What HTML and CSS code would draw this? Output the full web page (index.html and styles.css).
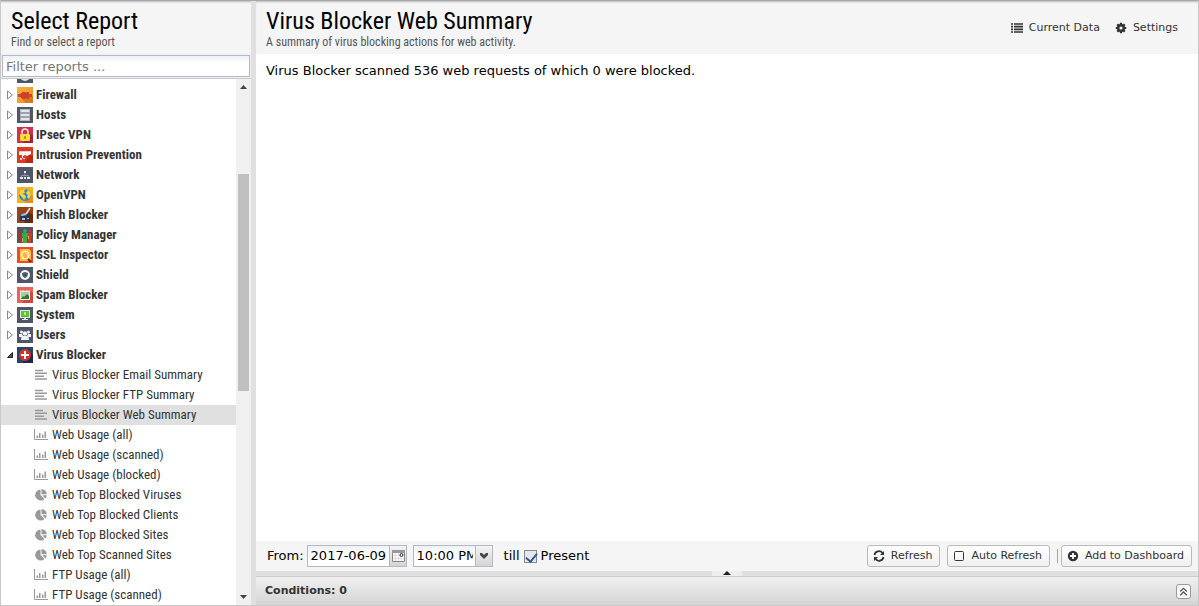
FILE: index.html
```
<!DOCTYPE html>
<html lang="en">
<head>
<meta charset="utf-8">
<title>Reports</title>
<link rel="stylesheet" href="styles.css">
</head>
<body>
<svg class="defs" aria-hidden="true">
  <linearGradient id="orange" x2="1" y2="1"><stop stop-color="#f5b63c"/><stop offset="1" stop-color="#e98a1c"/></linearGradient>
  <symbol id="i-arrow" viewBox="0 0 16 16"><path d="M6.500 4v8l5-4z" fill="#fff" stroke="#888"/></symbol>
  <symbol id="i-open" viewBox="0 0 16 16"><path d="M11.500 5.500v5h-5z" fill="#555" stroke="#222"/></symbol>
  <symbol id="i-events" viewBox="0 0 16 16"><path fill="#4f5668" d="M0 0h16v16H0z"/><circle cx="8" cy="9" r="5" fill="#e4e6ea"/><path d="M8 6v3h3" fill="none" stroke="#4f5668"/></symbol>
  <symbol id="i-firewall" viewBox="0 0 16 16"><path fill="url(#orange)" d="M0 0h16v16H0z"/><path fill="#d9781c" d="m5 12 10-3 1 1v6H9z"/><path fill="#d4402a" d="M1 7h3V6h1V5h3l1 1 1-1h2v2h3v3h-3v2h-2l-1-1-1 1H5v-1H4v-1H1z"/><path stroke="#b83a24" stroke-width=".7" d="M8.500 5.500v5"/></symbol>
  <symbol id="i-hosts" viewBox="0 0 16 16"><path fill="#4f5668" d="M0 0h16v16H0z"/><path fill="#b4b9c1" d="M3 2h10v12H3z"/><path stroke="#e3e6e9" stroke-width="2" d="M4 4h8M4 8h8M4 12h8"/><path stroke="#858c99" d="M3 6h10M3 10h10"/></symbol>
  <symbol id="i-ipsec" viewBox="0 0 16 16"><path fill="#d3304b" d="M0 0h16v16H0z"/><path fill="#a52039" d="m12 5 4 4v7H6z"/><path d="M5 8V5q0-3 3-3t3 3v3" fill="none" stroke="#f5e9ea" stroke-width="1.500"/><rect x="3" y="7" width="10" height="7" rx="1" fill="#fbdc3c"/><path stroke="#b07a12" stroke-width="1.500" d="M8 9v3"/></symbol>
  <symbol id="i-intrusion" viewBox="0 0 16 16"><path fill="#df3a20" d="M0 0h16v16H0z"/><path fill="#b92a14" d="m12 7 4 2v7H8z"/><path fill="#fff" d="M2 4h12v3l-4 2-2-1-2 1v2H5V8H2z"/><path fill="#ccd3d6" d="M2 4h12v1H2z"/><path fill="#d8dde0" d="M3 11h2v2H3zm3 0h2v1H6z"/></symbol>
  <symbol id="i-network" viewBox="0 0 16 16"><path fill="#4f5668" d="M0 0h16v16H0z"/><path d="M8 6v3M4.500 10V8.500h7V10" fill="none" stroke="#8a909c"/><path fill="#e6e8ee" d="M7 4h2v2H7zM3 10h3v2H3zm4 0h2v2H7zm3 0h3v2h-3z"/></symbol>
  <symbol id="i-openvpn" viewBox="0 0 16 16"><path fill="#fbb214" d="M0 0h16v16H0z"/><path fill="#f38d0d" d="m14 7 2 2v7H7z"/><circle cx="8" cy="8" r="6" fill="#2e8ccb"/><path fill="#ffd23f" d="M3 4q2-2 6-2L7 4l1 2-3 1 3 1 1 2-2 3-2-3-3-3zm8-1q3 2 3 5l-2 4-2-2 1-2-2-2z"/></symbol>
  <symbol id="i-phish" viewBox="0 0 16 16"><path fill="#9a4115" d="M0 0h16v16H0z"/><path fill="#6b2a0c" d="m12 5 4 3v8H7z"/><path stroke="#e6e1dc" stroke-width="1.500" d="m9 7 4-6"/><path fill="#233a59" d="M3 7h10v7H3z"/><path fill="#b4c0cf" d="m3 8 5-2 2 2-5 1zm2 3h3v2H5zm5 0h2v1h-2z"/></symbol>
  <symbol id="i-policy" viewBox="0 0 16 16"><path fill="#4f5668" d="M0 0h16v16H0z"/><g fill="#a8322f"><circle cx="3" cy="5" r="1.500"/><path d="M1 7h4v3H4v6H2v-6H1z"/></g><g fill="#2cae51"><circle cx="8" cy="4" r="2"/><path d="M5 6h6v4h-1v6H6v-6H5z"/></g><g fill="#d23b31"><circle cx="13" cy="4" r="1.500"/><path d="M11 6h4v3h-1v7h-3z"/></g><path stroke="#e5ae30" d="M5.500 11v4m6-6v3"/></symbol>
  <symbol id="i-ssl" viewBox="0 0 16 16"><path fill="#ef4930" d="M0 0h16v16H0z"/><path fill="#ffbf3b" d="M3 2h9l2 2v10H3z"/><circle cx="8" cy="8" r="4" fill="#ffd76c" stroke="#fff5e0"/><path stroke="#e58a35" d="M6 8h4M7 10h3M7 6h1"/><path stroke="#7a2418" stroke-width="2" d="m11 12 3 3"/></symbol>
  <symbol id="i-shield" viewBox="0 0 16 16"><path fill="#4f5668" d="M0 0h16v16H0z"/><circle cx="8" cy="8" r="5" fill="#f4f5f7"/><path fill="#4f5668" d="m8 5 3 1q0 4-3 5-3-1-3-5z"/></symbol>
  <symbol id="i-spam" viewBox="0 0 16 16"><path fill="#ec625b" d="M0 0h16v16H0z"/><path fill="#d1463f" d="m14 4 2 2v10H5z"/><path fill="#f4e9d9" d="m3 3 2 1 1-1 2 1 2-1 1 1 2-1v10H3z"/><path fill="#a9cbb4" d="M4 5h8v7H4z"/><path fill="#2b7a35" d="m4 12 2-3 1 1 3-3 2 2v3z"/></symbol>
  <symbol id="i-system" viewBox="0 0 16 16"><path fill="#4f5668" d="M0 0h16v16H0z"/><path fill="#dfe4df" d="M3 3h10v8H9v1h2v1H5v-1h2v-1H3z"/><path fill="#62bf3d" d="M4 4h8v6H4z"/><path fill="#b5e69d" d="M7 5h2v3H7z"/></symbol>
  <symbol id="i-users" viewBox="0 0 16 16"><path fill="#4f5668" d="M0 0h16v16H0z"/><g fill="#f0f1f4"><circle cx="4.500" cy="5" r="1.500"/><circle cx="11.500" cy="5" r="1.500"/><circle cx="8" cy="6.500" r="2.200"/><path d="M2 7h3l1 2-2 1H2zm12 0h-3l-1 2 2 1h2zM4 13q0-4 2-4h4q2 0 2 4z"/></g></symbol>
  <symbol id="i-virus" viewBox="0 0 16 16"><path fill="#29426a" d="M0 0h16v16H0z"/><path fill="#172a4a" d="m13 5 3 3v8H6z"/><circle cx="8" cy="8" r="6" fill="#cf352b"/><path fill="#fff" d="M7 4h2v3h3v2H9v3H7V9H4V7h3z"/></symbol>
  <symbol id="i-text" viewBox="0 0 14 14"><path stroke="#999" stroke-width="1.600" d="M1 2.500h8M1 5.300h12M1 8.200h9M1 11h12"/></symbol>
  <symbol id="i-bars" viewBox="0 0 14 14"><path d="M.5 1v10.500H14" fill="none" stroke="#999"/><path fill="#999" d="M2.500 7.500H4V10H2.500zM5 5h1.500v5H5zm3 1.500h1.500V10H8zm2.500-3H12V10h-1.500z"/></symbol>
  <symbol id="i-pie" viewBox="0 0 14 14"><g fill="#999"><path d="M6.500 1.500V7l4 4A5.500 5.500 0 1 1 6.500 1.500z"/><path d="M7.500 1A5.500 5.500 0 0 1 12.800 6.200H7.500zM8.300 7.200h4.500a5.500 5.500 0 0 1-1.500 3.200z"/></g></symbol>
</svg>

<div class="app">
  <aside class="sidebar">
    <header class="head">
      <h1>Select Report</h1>
      <p>Find or select a report</p>
    </header>
    <div class="filter"><input type="text" aria-label="Filter reports" placeholder="Filter reports ..."></div>
    <div class="treebox">
      <ul class="tree">
        <li class="group"><svg class="exp"><use href="#i-arrow"/></svg><svg class="app-icon"><use href="#i-events"/></svg>Events</li>
        <li class="group"><svg class="exp"><use href="#i-arrow"/></svg><svg class="app-icon"><use href="#i-firewall"/></svg>Firewall</li>
        <li class="group"><svg class="exp"><use href="#i-arrow"/></svg><svg class="app-icon"><use href="#i-hosts"/></svg>Hosts</li>
        <li class="group"><svg class="exp"><use href="#i-arrow"/></svg><svg class="app-icon"><use href="#i-ipsec"/></svg>IPsec VPN</li>
        <li class="group"><svg class="exp"><use href="#i-arrow"/></svg><svg class="app-icon"><use href="#i-intrusion"/></svg>Intrusion Prevention</li>
        <li class="group"><svg class="exp"><use href="#i-arrow"/></svg><svg class="app-icon"><use href="#i-network"/></svg>Network</li>
        <li class="group"><svg class="exp"><use href="#i-arrow"/></svg><svg class="app-icon"><use href="#i-openvpn"/></svg>OpenVPN</li>
        <li class="group"><svg class="exp"><use href="#i-arrow"/></svg><svg class="app-icon"><use href="#i-phish"/></svg>Phish Blocker</li>
        <li class="group"><svg class="exp"><use href="#i-arrow"/></svg><svg class="app-icon"><use href="#i-policy"/></svg>Policy Manager</li>
        <li class="group"><svg class="exp"><use href="#i-arrow"/></svg><svg class="app-icon"><use href="#i-ssl"/></svg>SSL Inspector</li>
        <li class="group"><svg class="exp"><use href="#i-arrow"/></svg><svg class="app-icon"><use href="#i-shield"/></svg>Shield</li>
        <li class="group"><svg class="exp"><use href="#i-arrow"/></svg><svg class="app-icon"><use href="#i-spam"/></svg>Spam Blocker</li>
        <li class="group"><svg class="exp"><use href="#i-arrow"/></svg><svg class="app-icon"><use href="#i-system"/></svg>System</li>
        <li class="group"><svg class="exp"><use href="#i-arrow"/></svg><svg class="app-icon"><use href="#i-users"/></svg>Users</li>
        <li class="group"><svg class="exp"><use href="#i-open"/></svg><svg class="app-icon"><use href="#i-virus"/></svg>Virus Blocker</li>
        <li class="leaf"><svg><use href="#i-text"/></svg>Virus Blocker Email Summary</li>
        <li class="leaf"><svg><use href="#i-text"/></svg>Virus Blocker FTP Summary</li>
        <li class="leaf selected"><svg><use href="#i-text"/></svg>Virus Blocker Web Summary</li>
        <li class="leaf"><svg><use href="#i-bars"/></svg>Web Usage (all)</li>
        <li class="leaf"><svg><use href="#i-bars"/></svg>Web Usage (scanned)</li>
        <li class="leaf"><svg><use href="#i-bars"/></svg>Web Usage (blocked)</li>
        <li class="leaf"><svg><use href="#i-pie"/></svg>Web Top Blocked Viruses</li>
        <li class="leaf"><svg><use href="#i-pie"/></svg>Web Top Blocked Clients</li>
        <li class="leaf"><svg><use href="#i-pie"/></svg>Web Top Blocked Sites</li>
        <li class="leaf"><svg><use href="#i-pie"/></svg>Web Top Scanned Sites</li>
        <li class="leaf"><svg><use href="#i-bars"/></svg>FTP Usage (all)</li>
        <li class="leaf"><svg><use href="#i-bars"/></svg>FTP Usage (scanned)</li>
      </ul>
      <div class="scrollbar">
        <svg class="scroll-arrow" viewBox="0 0 15 16"><path d="m4 10 3.500-4 3.500 4z" fill="#444"/></svg>
        <div class="track"><span class="before"></span><span class="thumb"></span><span class="after"></span></div>
        <svg class="scroll-arrow" viewBox="0 0 15 16"><path d="m4 6 3.500 4L11 6z" fill="#444"/></svg>
      </div>
    </div>
  </aside>

  <main class="main">
    <header class="head main-head">
      <div>
        <h1>Virus Blocker Web Summary</h1>
        <p>A summary of virus blocking actions for web activity.</p>
      </div>
      <nav class="actions">
        <button class="plain"><svg class="icon" viewBox="0 0 14 14"><path d="M1 3h2M1 5.700h2M1 8.300h2M1 11h2M4 3h9M4 5.700h9M4 8.300h9M4 11h9" stroke="#333" stroke-width="1.700"/></svg>Current Data</button>
        <button class="plain"><svg class="icon" viewBox="0 0 14 14"><circle cx="7" cy="7" r="2.800" fill="none" stroke="#333" stroke-width="2.400"/><path d="M7 1.800v2M7 10.200v2M1.800 7h2M10.200 7h2M3.300 3.300l1.400 1.400M9.300 9.300l1.400 1.400M10.700 3.300 9.300 4.700M4.700 9.300l-1.400 1.400" stroke="#333" stroke-width="2.200"/></svg>Settings</button>
      </nav>
    </header>
    <section class="report">Virus Blocker scanned 536 web requests of which 0 were blocked.</section>
    <footer class="toolbar">
      <label for="from">From:</label>
      <span class="field date"><input id="from" type="text" value="2017-06-09"><button aria-label="Pick a date"><svg viewBox="0 0 16 20"><path d="M2.500 4.500h12v11h-12z" fill="#fff" stroke="#888"/><path fill="#999" d="M2 4h13v3H2z"/><path d="M5.500 7v8M8.500 7v8M11.500 12v3M3 9.500h7M3 12.500h11" stroke="#ddd"/><circle cx="11.500" cy="9" r="1.500" fill="#fff" stroke="#222"/></svg></button></span>
      <span class="field time"><input type="text" aria-label="Time" value="10:00 PM"><button aria-label="Pick a time"><svg viewBox="0 0 16 20"><path d="M4 7h2l2 2 2-2h2v2l-4 4-4-4z" fill="#444"/></svg></button></span>
      <label class="till" for="present">till</label>
      <input class="check" id="present" type="checkbox" checked>
      <label for="present">Present</label>
      <span class="spacer"></span>
      <button class="btn"><svg class="icon" viewBox="0 0 14 14"><path d="M2.500 6A4.500 4.500 0 0 1 10.500 4M11.500 8a4.500 4.500 0 0 1-8 2" fill="none" stroke="#333" stroke-width="1.800"/><path d="M12 2v4H8zM2 12V8h4z" fill="#333"/></svg>Refresh</button>
      <button class="btn auto"><svg class="icon" viewBox="0 0 14 14"><rect x="2.500" y="2.500" width="9" height="9" rx="1" fill="none" stroke="#333"/></svg>Auto Refresh</button>
      <span class="sep"></span>
      <button class="btn"><svg class="icon" viewBox="0 0 14 14"><circle cx="7" cy="7" r="5.200" fill="#333"/><path d="M7 4v6M4 7h6" stroke="#fff" stroke-width="1.800"/></svg>Add to Dashboard</button>
    </footer>
    <div class="splitter"><svg viewBox="0 0 32 5"><path d="M1 0h30v5H1z" fill="#eee"/><path d="m12 4 4-4 4 4z" fill="#222"/></svg></div>
    <section class="conditions">
      <strong>Conditions: 0</strong>
      <button aria-label="Expand conditions"><svg viewBox="0 0 14 14"><path d="m3.500 7 3.500-3.500L10.500 7M3.500 11 7 7.500l3.500 3.500" fill="none" stroke="#555" stroke-width="1.300"/></svg></button>
    </section>
  </main>
</div>
</body>
</html>
```
FILE: styles.css
```
* { box-sizing: border-box; }
body {
  margin: 0;
  font: 13px/16px "DejaVu Sans", sans-serif;
  color: #000;
}
.defs { position: absolute; width: 0; height: 0; }
button, input { font: inherit; color: inherit; margin: 0; padding: 0; border-radius: 0; outline: 0; }
button { display: flex; align-items: center; background: none; border: 0; }
svg { display: block; flex: none; }

.app {
  display: flex;
  gap: 5px;
  height: 100vh;
  background: #e0e0e0;
  border: 1px solid #c8c8c8;
  border-top-color: #a8a8a8;
}
.sidebar { width: 250px; display: flex; flex-direction: column; flex: none; }
.main { flex: 1; min-width: 0; display: flex; flex-direction: column; }

.head {
  height: 53px;
  flex: none;
  padding: 6px 10px 0;
  background: #f5f5f5;
  box-shadow: inset 0 2px 2px -1px #bbb;
  font-family: "Roboto Condensed", "Liberation Sans Narrow", Roboto, sans-serif;
}
.head h1 { margin: 0; font-size: 24px; line-height: 28px; font-weight: 400; }
.head p { margin: 0; font-size: 12px; line-height: 14px; color: #555; }
.main-head { display: flex; justify-content: space-between; }

.filter { padding: 1px; background: #f0f0f0; border-bottom: 1px solid #c8c8c8; }
.filter input {
  display: block;
  width: 100%;
  height: 22px;
  padding: 0 3px;
  border: 1px solid #b5b8c8;
  background: linear-gradient(#eef2f4, #fff 8px);
}
.filter input::placeholder { color: #777; opacity: 1; }

.treebox { flex: 1; min-height: 0; display: flex; background: #fff; overflow: hidden; }
.tree {
  flex: 1;
  margin: -14px 0 0;
  padding: 0;
  list-style: none;
  color: #333;
  font: 13px/20px "Roboto Condensed", "Liberation Sans Narrow", Roboto, sans-serif;
}
.tree li { display: flex; align-items: center; height: 20px; white-space: nowrap; }
.group { font-weight: 700; }
.exp, .app-icon { width: 16px; height: 16px; }
.app-icon { margin-right: 3px; }
.leaf { padding-left: 33px; }
.leaf svg { width: 14px; height: 14px; margin-right: 4px; }
.selected { background: #e0e0e0; }

.scrollbar { width: 15px; background: #f0f0f0; display: flex; flex-direction: column; }
.scroll-arrow { width: 15px; height: 16px; }
.track { flex: 1; display: flex; flex-direction: column; padding: 0 2px; }
.before { flex: 79; }
.thumb { flex: 217; background: #c0c0c0; }
.after { flex: 198; }

.actions { display: flex; gap: 14px; padding: 13px 10px 0 0; font: 11px/16px "DejaVu Sans", sans-serif; color: #333; }
.plain { height: 16px; gap: 5px; }
.icon { width: 14px; height: 14px; }

.report { flex: 1; padding: 9px 10px; background: #fff; }

.toolbar { display: flex; align-items: center; height: 30px; padding: 0 6px 0 11px; background: #f5f5f5; }
.field { display: flex; height: 22px; border: 1px solid #b5b8c8; background: linear-gradient(#eef2f4, #fff 8px); }
.field input { flex: 1; min-width: 0; width: 0; padding: 0 0 0 3px; border: 0; background: none; }
.field button { width: 17px; border-left: 1px solid #b5b8c8; background: linear-gradient(#f4f4f4, #d4d4d4); }
.field svg { width: 16px; height: 20px; }
.date { width: 100px; margin: 0 6px 0 3px; }
.time { width: 80px; }
.time input { margin-right: 2px; }
.till { margin: 0 4px 0 11px; }
.check {
  appearance: none;
  width: 13px;
  height: 13px;
  margin-right: 4px;
  border: 1px solid #888;
  background: #e4e8ee;
}
.check:checked::before {
  content: "";
  display: block;
  width: 5px;
  height: 9px;
  margin: 0 0 0 3px;
  border: solid #3a5794;
  border-width: 0 2px 2px 0;
  transform: rotate(40deg);
}
.spacer { flex: 1; }
.btn {
  height: 22px;
  padding: 0 7px 0 4px;
  gap: 5px;
  border: 1px solid #bbb;
  border-radius: 3px;
  background: linear-gradient(#fff, #f0f0f0);
  color: #333;
  font-size: 11px;
}
.auto { margin-left: 7px; }
.sep { width: 1px; height: 14px; margin: 0 3px 0 7px; background: #aca899; }

.splitter { height: 5px; display: flex; justify-content: center; }
.splitter svg { width: 32px; height: 5px; }
.conditions {
  display: flex;
  align-items: center;
  justify-content: space-between;
  height: 29px;
  padding: 0 7px 0 9px;
  border-top: 1px solid #ccc;
  background: linear-gradient(#f0f0f0, #d4d4d4);
  color: #333;
  font-size: 11px;
}
.conditions button { width: 15px; height: 15px; border: 1px solid #999; border-radius: 3px; background: #f8f8f8; }
.conditions svg { width: 13px; height: 13px; }
```
